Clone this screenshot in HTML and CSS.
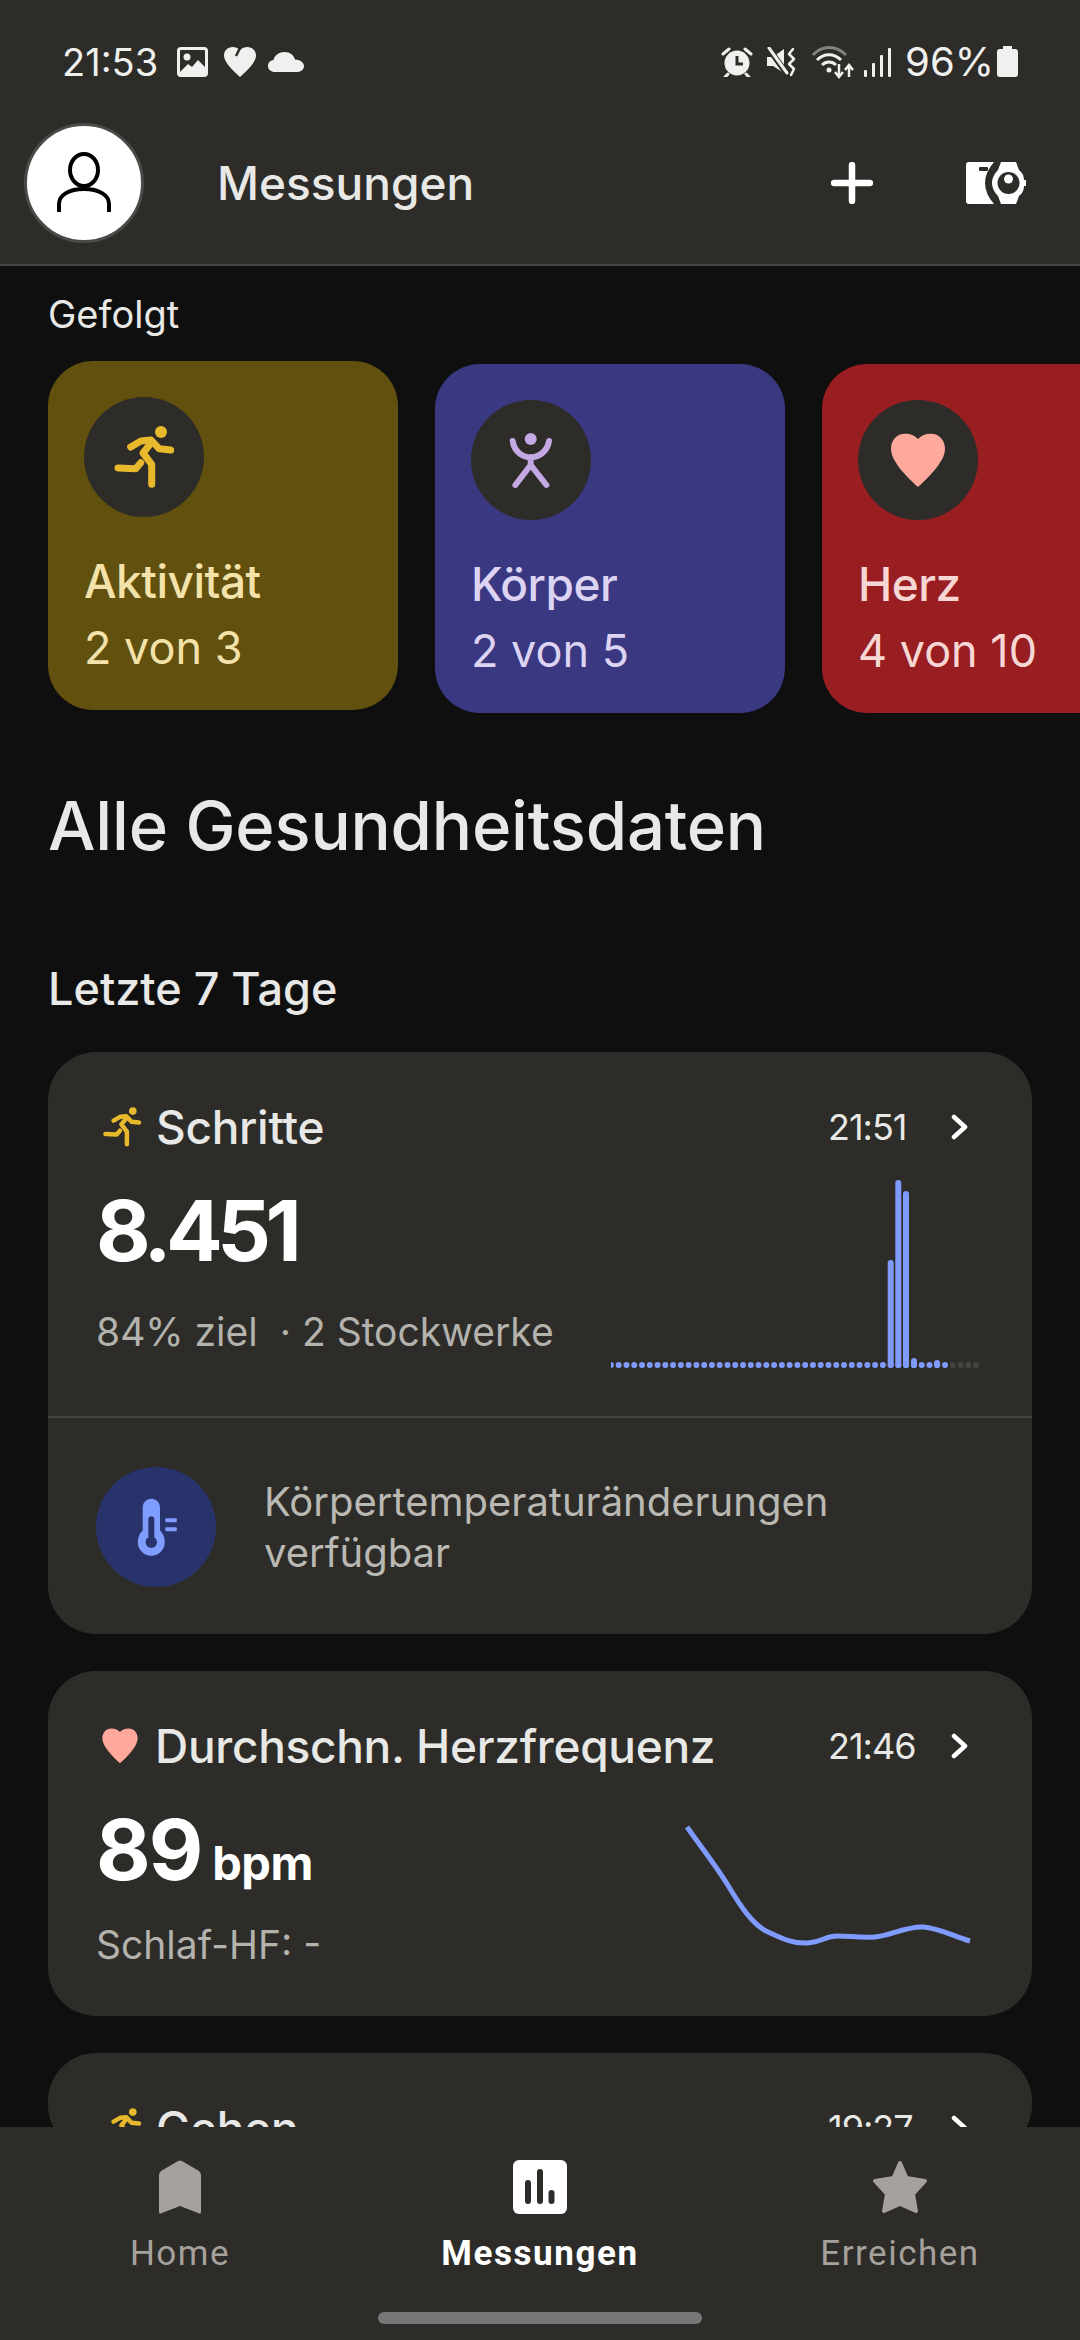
FILE: index.html
```html
<!DOCTYPE html>
<html lang="de">
<head>
    <meta charset="UTF-8">
    <meta name="viewport" content="width=device-width, initial-scale=1.0">
    <title>Messungen</title>
    <link rel="stylesheet" href="styles.css">
</head>
<body>

<svg class="defs" width="0" height="0">
    <symbol id="runner" viewBox="30 28 62 66">
        <circle cx="78" cy="36" r="6" fill="currentColor"/>
        <g fill="none" stroke="currentColor" stroke-width="7" stroke-linecap="round" stroke-linejoin="round">
            <path d="M47.7 51 58 45 68 44 76 52.7 87.7 54"/>
            <path d="M68 47 60 57 68.7 68.3V88.3"/>
            <path d="M57.8 66.7 52.7 72.7 35 72"/>
        </g>
    </symbol>
    <symbol id="heart" viewBox="33 32 54 55">
        <path fill="currentColor" d="M60 38C56 34 52 32.7 47 32.7 39 32.7 33 39 33 47.7 33 60 48 75 60 86 72 75 87 60 87 47.7 87 39 81 32.7 73 32.7 68 32.7 64 34 60 38Z"/>
    </symbol>
    <symbol id="chevron" viewBox="0 0 20 26">
        <path d="M4 3 15 13 4 23" fill="none" stroke="currentColor" stroke-width="4.5" stroke-linecap="round" stroke-linejoin="round"/>
    </symbol>
</svg>

<div class="screen">
    <header class="top">
        <div class="status">
            <span class="status-time">21:53</span>
            <svg class="si" width="31" height="30" viewBox="0 0 31 30">
                <rect width="31" height="30" rx="4" fill="#f0f0ee"/>
                <rect x="3" y="3" width="25" height="24" rx="1" fill="#2d2c28"/>
                <circle cx="10" cy="10" r="3.5" fill="#f0f0ee"/>
                <path d="M3 25 11 17 15 20 21 13 28 20V27H3Z" fill="#f0f0ee"/>
            </svg>
            <svg class="si si-heart" width="32" height="30" viewBox="0 0 32 30">
                <path fill="#f0f0ee" d="M16 30C8 23 0 15 0 8.500 0 3.500 4 0 8.500 0 11.500 0 14 1 16 3 18 1 20.500 0 23.500 0 28 0 32 3.500 32 8.500 32 15 24 23 16 30Z"/>
                <path d="M16 1 12 9" stroke="#2d2c28" stroke-width="2.500"/>
            </svg>
            <svg class="si" width="36" height="20" viewBox="0 0 36 20">
                <path fill="#f0f0ee" d="M7 20C3 20 0 17.500 0 14 0 11 2 8.500 5.500 8 6.500 3.500 11 0 16.500 0 22 0 26 3.500 27 7.500 32 7.500 36 10.500 36 14 36 17.500 33 20 29 20Z"/>
            </svg>
            <span class="status-gap"></span>
            <svg class="si si-alarm" width="32" height="30" viewBox="0 0 32 30">
                <circle cx="16" cy="16" r="12.500" fill="#f0f0ee"/>
                <path d="M16 9V17H22" fill="none" stroke="#2d2c28" stroke-width="3"/>
                <path d="M2 7 8 2M30 7 24 2M7 27 4 30M25 27 28 30" stroke="#f0f0ee" stroke-width="3" stroke-linecap="round"/>
            </svg>
            <svg class="si si-mute" width="30" height="30" viewBox="0 0 30 30">
                <path fill="#f0f0ee" d="M0 10H6L17 2V26L6 19H0Z"/>
                <path d="M2 2 20 27" stroke="#2d2c28" stroke-width="6"/>
                <path d="M2 1 20 26" stroke="#f0f0ee" stroke-width="3" stroke-linecap="round"/>
                <path d="M26 2 22 7 27 12 22 17 27 22 24 28" fill="none" stroke="#f0f0ee" stroke-width="2.500" stroke-linecap="round" stroke-linejoin="round"/>
            </svg>
            <svg class="si si-wifi" width="44" height="34" viewBox="0 0 44 34">
                <path d="M2 10C11 0 25 0 35 10" fill="none" stroke="#84837f" stroke-width="3"/>
                <path d="M6 15C13 8 23 8 30 15M11 20C15 16 21 16 25 20" fill="none" stroke="#f0f0ee" stroke-width="3"/>
                <circle cx="18" cy="25" r="2.500" fill="#f0f0ee"/>
                <path d="M28 19V31M24 27 28 32 32 27M38 32V21M34 25 38 20 42 25" fill="none" stroke="#f0f0ee" stroke-width="2.500"/>
            </svg>
            <svg class="si si-signal" width="27" height="30" viewBox="0 0 27 30">
                <rect x="0" y="23" width="3" height="7" rx="1" fill="#f0f0ee"/>
                <rect x="8" y="16" width="3" height="14" rx="1" fill="#f0f0ee"/>
                <rect x="16" y="8" width="3" height="22" rx="1" fill="#f0f0ee"/>
                <rect x="24" y="1" width="3" height="29" rx="1" fill="#f0f0ee"/>
            </svg>
            <span class="status-pct">96%</span>
            <svg class="si" width="21" height="31" viewBox="0 0 21 31">
                <path fill="#f0f0ee" d="M6 0H15V3H18Q21 3 21 6V28Q21 31 18 31H3Q0 31 0 28V6Q0 3 3 3H6Z"/>
            </svg>
        </div>
        <div class="appbar">
            <div class="avatar">
                <svg width="56" height="62" viewBox="0 0 56 62">
                    <ellipse cx="28" cy="18" rx="14" ry="16" fill="none" stroke="#000" stroke-width="4"/>
                    <path d="M3 60V52C3 43 13 37 28 37S53 43 53 52V60" fill="none" stroke="#000" stroke-width="4"/>
                </svg>
            </div>
            <span class="appbar-title">Messungen</span>
            <svg class="plus" width="42" height="42" viewBox="0 0 42 42">
                <path d="M21 3V39M3 21H39" stroke="#fff" stroke-width="6.500" stroke-linecap="round"/>
            </svg>
            <svg class="watch" width="60" height="42" viewBox="0 0 60 42">
                <path fill="#fff" d="M3 0H28Q10 21 28 42H3Q0 42 0 39V3Q0 0 3 0Z"/>
                <rect x="13" y="5" width="9" height="4" rx="1" fill="#2d2c28"/>
                <path fill="#fff" d="M35 0H50L53 8Q58 12 58 18H60V24H58Q58 30 53 34L50 42H35L32 34Q26 28 26 21 26 14 32 8Z"/>
                <circle cx="42.500" cy="21" r="11" fill="#2d2c28"/>
                <circle cx="42.500" cy="17" r="4.500" fill="#fff"/>
            </svg>
        </div>
    </header>

    <main class="content">
        <div class="followed">Gefolgt</div>
        <div class="tiles">
            <div class="tile tile-activity">
                <div class="tile-icon">
                    <svg class="tile-runner" width="62" height="66"><use href="#runner"/></svg>
                </div>
                <div class="tile-title">Aktivität</div>
                <div class="tile-sub">2 von 3</div>
            </div>
            <div class="tile tile-body">
                <div class="tile-icon">
                    <svg class="tile-person" width="60" height="60" viewBox="30 30 60 60">
                        <circle cx="59.700" cy="39" r="6" fill="currentColor"/>
                        <path d="M41.700 41C43 51 51 57.300 59.700 57.300S76.500 51 78 41M59.700 57V65M44.400 85 59.700 65 75.400 85" fill="none" stroke="currentColor" stroke-width="6" stroke-linecap="round" stroke-linejoin="round"/>
                    </svg>
                </div>
                <div class="tile-title">Körper</div>
                <div class="tile-sub">2 von 5</div>
            </div>
            <div class="tile tile-heart">
                <div class="tile-icon">
                    <svg class="tile-heart-icon" width="54" height="55"><use href="#heart"/></svg>
                </div>
                <div class="tile-title">Herz</div>
                <div class="tile-sub">4 von 10</div>
            </div>
        </div>

        <h1 class="all-title">Alle Gesundheitsdaten</h1>
        <h2 class="week-title">Letzte 7 Tage</h2>

        <section class="card">
            <div class="card-top">
                <div class="card-head">
                    <svg class="head-icon runner" width="40" height="42"><use href="#runner"/></svg>
                    <span class="card-title">Schritte</span>
                    <span class="card-time">21:51</span>
                    <svg class="chevron" width="20" height="26"><use href="#chevron"/></svg>
                </div>
                <div class="steps-row">
                    <div class="card-text">
                        <div class="value value-steps">8.451</div>
                        <div class="sub">84% ziel &nbsp;· 2 Stockwerke</div>
                    </div>
                    <svg class="steps-chart" width="372" height="196" viewBox="0 0 372 196">
                        <line x1="-0.07" y1="189" x2="335" y2="189" stroke="#7f9bff" stroke-width="6" stroke-linecap="round" stroke-dasharray="0 7.77"/>
                        <line x1="341.810" y1="189" x2="365.200" y2="189" stroke="#454441" stroke-width="6" stroke-linecap="round" stroke-dasharray="0 7.77"/>
                        <g fill="#7f9bff">
                            <rect x="276.700" y="84" width="6" height="108" rx="3"/>
                            <rect x="284.300" y="4" width="6" height="188" rx="3"/>
                            <rect x="292" y="15" width="6" height="177" rx="3"/>
                            <rect x="300" y="182" width="6" height="10" rx="3"/>
                            <rect x="323" y="184" width="6" height="8" rx="3"/>
                        </g>
                    </svg>
                </div>
            </div>
            <div class="card-note">
                <svg class="note-icon" width="120" height="120" viewBox="0 0 120 120">
                    <circle cx="60" cy="60" r="60" fill="#27336a"/>
                    <path fill="#7f9cff" d="M46.700 40.500C46.700 35.500 50.500 31.700 55.300 31.700S64 35.500 64 40.500V63.500C67 66 68.800 70.500 68.800 75.300 68.800 82.800 62.800 88.800 55.300 88.800S41.800 82.800 41.800 75.300C41.800 70.500 43.700 66 46.700 63.500Z"/>
                    <path fill="#27336a" d="M52.300 52C52.300 50.300 53.600 49.300 55.300 49.300S58.300 50.300 58.300 52V70H52.300Z"/>
                    <circle cx="55.300" cy="75.300" r="5.700" fill="#27336a"/>
                    <rect x="69.300" y="51.300" width="11.500" height="4" rx="1" fill="#7f9cff"/>
                    <rect x="69.300" y="60.300" width="11.500" height="4" rx="1" fill="#7f9cff"/>
                </svg>
                <div class="note-text">Körpertemperaturänderungen<br>verfügbar</div>
            </div>
        </section>

        <section class="card">
            <div class="card-head">
                <svg class="head-icon heart" width="38" height="36"><use href="#heart"/></svg>
                <span class="card-title">Durchschn. Herzfrequenz</span>
                <span class="card-time">21:46</span>
                <svg class="chevron" width="20" height="26"><use href="#chevron"/></svg>
            </div>
            <div class="hr-row">
                <div class="card-text">
                    <div class="value">89 <span class="unit">bpm</span></div>
                    <div class="sub sub-hr">Schlaf-HF: -</div>
                </div>
                <svg class="hr-chart" width="295" height="130" viewBox="0 0 295 130">
                    <path d="M2 7C16 27 32 47 44 67S68 105 83 112 108 124 123 123 140 116 152 116 176 118 190 117 222 106 238 107 268 116 285 121" fill="none" stroke="#7f9bff" stroke-width="5"/>
                </svg>
            </div>
        </section>

        <section class="card">
            <div class="card-head">
                <svg class="head-icon runner" width="40" height="42"><use href="#runner"/></svg>
                <span class="card-title">Gehen</span>
                <span class="card-time">19:27</span>
                <svg class="chevron" width="20" height="26"><use href="#chevron"/></svg>
            </div>
        </section>
    </main>

    <nav class="nav">
        <div class="nav-item">
            <svg width="42" height="54" viewBox="0 0 42 54">
                <path fill="#a5a19c" d="M19 1 2 11Q0 13 0 15V52Q0 55 3 53L21 46 39 53Q42 55 42 52V15Q42 13 40 11L23 1Q21 0 19 1Z"/>
            </svg>
            <span class="nav-label">Home</span>
        </div>
        <div class="nav-item nav-active">
            <svg width="54" height="54" viewBox="0 0 54 54">
                <rect width="54" height="54" rx="6" fill="#fff"/>
                <path d="M15 23V41M27 12V41M38.500 33V41" stroke="#2d2c28" stroke-width="6" stroke-linecap="round"/>
            </svg>
            <span class="nav-label">Messungen</span>
        </div>
        <div class="nav-item">
            <svg width="56" height="54" viewBox="0 0 56 54">
                <path fill="#a5a19c" stroke="#a5a19c" stroke-width="4" stroke-linejoin="round" d="M28 3 34.500 18 53 21 41 34 44 51 28 44 12 51 15 34 3 21 21.500 18Z"/>
            </svg>
            <span class="nav-label">Erreichen</span>
        </div>
        <div class="home-bar"></div>
    </nav>
</div>

</body>
</html>
```

FILE: styles.css
```css
html, body {
    margin: 0;
    padding: 0;
    background-color: #0f0f0f;
}
body {
    font-family: Inter, "Liberation Sans", sans-serif;
    color: #e8e8e6;
}
.defs {
    display: block;
    height: 0;
}
.screen {
    width: 1080px;
    height: 2340px;
    display: flex;
    flex-direction: column;
    overflow: hidden;
}

/* top bar */
.top {
    background-color: #2d2c28;
    border-bottom: 2px solid #464542;
    flex-shrink: 0;
}
.status {
    height: 123px;
    display: flex;
    align-items: center;
    padding: 0 62px;
    color: #f0f0ee;
    font-size: 38px;
}
.status-time {
    margin-right: 19px;
}
.si {
    margin-right: 16px;
    flex-shrink: 0;
}
.si-heart {
    margin-right: 12px;
}
.status-gap {
    flex: 1;
}
.si-alarm {
    margin-right: 14px;
}
.si-mute {
    margin-right: 14px;
}
.si-wifi {
    margin-right: 9px;
}
.status-pct {
    font-size: 40px;
    margin: 0 3px 0 -2px;
}
.status .si:last-child {
    margin-right: 0;
}
.appbar {
    height: 141px;
    display: flex;
    align-items: flex-start;
    padding: 0 54px 0 24px;
}
.avatar {
    width: 114px;
    height: 114px;
    border: 3px solid #4a4a48;
    border-radius: 50%;
    background-color: #fff;
    display: flex;
    align-items: center;
    justify-content: center;
}
.appbar-title {
    font-size: 46px;
    font-weight: 500;
    line-height: 120px;
    margin-left: 73px;
    flex: 1;
}
.plus {
    margin-top: 39px;
}
.watch {
    margin: 39px 0 0 93px;
}

/* scrolling part */
.content {
    flex: 1;
    min-height: 0;
    overflow: hidden;
    padding: 26px 48px 0;
}
.followed {
    font-size: 38px;
    line-height: 44px;
}
.tiles {
    display: flex;
    align-items: flex-start;
    gap: 37px;
    margin: 25px -48px 0 0;
    overflow: hidden;
}
.tile {
    width: 350px;
    height: 349px;
    box-sizing: border-box;
    flex-shrink: 0;
    padding: 36px;
    border-radius: 45px;
}
.tile-activity {
    background-color: #62500f;
    color: #f3e2a9;
}
.tile-body {
    background-color: #3b3882;
    color: #dcd4f2;
    margin-top: 3px;
}
.tile-heart {
    background-color: #981e22;
    color: #f7d7d4;
    margin-top: 3px;
}
.tile-icon {
    width: 120px;
    height: 120px;
    border-radius: 50%;
    background-color: #2d2c28;
    display: flex;
    align-items: center;
    justify-content: center;
}
.tile-runner {
    color: #e8b92d;
}
.tile-person {
    color: #c3a8e3;
}
.tile-heart-icon {
    color: #ffa99d;
}
.tile-title {
    font-size: 46px;
    font-weight: 500;
    line-height: 56px;
    margin-top: 36px;
    letter-spacing: -0.5px;
}
.tile-sub {
    font-size: 45px;
    line-height: 56px;
    margin-top: 11px;
}
.all-title {
    font-size: 67px;
    font-weight: 500;
    line-height: 80px;
    margin: 73px 0 0;
    letter-spacing: -0.2px;
}
.week-title {
    font-size: 45px;
    font-weight: 500;
    line-height: 60px;
    margin: 93px 0 33px;
}

/* cards */
.card {
    background-color: #2d2c28;
    border-radius: 48px;
    margin-bottom: 37px;
    overflow: hidden;
}
.card-head {
    display: flex;
    align-items: center;
    height: 50px;
    padding: 50px 62px 0 54px;
}
.head-icon {
    flex-shrink: 0;
    margin-right: 14px;
}
.head-icon.runner {
    color: #e8b92d;
}
.head-icon.heart {
    color: #ffa99d;
    margin: 0 17px 0 0;
    width: 36px;
}
.card-title {
    font-size: 46px;
    font-weight: 500;
    flex: 1;
    white-space: nowrap;
    letter-spacing: -0.3px;
}
.card-time {
    font-size: 36px;
    letter-spacing: -1px;
    width: 122px;
}
.chevron {
    color: #fff;
}
.steps-row {
    display: flex;
    justify-content: space-between;
    padding: 24px 49px 44px 48px;
}
.card-text {
    padding-top: 10px;
}
.value {
    font-size: 84px;
    font-weight: 700;
    line-height: 90px;
    color: #fff;
    letter-spacing: -2px;
    white-space: nowrap;
}
.value-steps {
    letter-spacing: -5.5px;
}
.unit {
    font-size: 47px;
    line-height: 0;
    letter-spacing: -0.5px;
    margin-left: -7px;
}
.sub {
    font-size: 39px;
    line-height: 48px;
    margin-top: 32px;
    color: #b3b2ad;
    white-space: nowrap;
}
.sub-hr {
    margin-top: 26px;
}
.steps-chart {
    display: block;
    flex-shrink: 0;
}
.card-note {
    border-top: 2px solid #454441;
    display: flex;
    align-items: center;
    gap: 48px;
    padding: 49px 48px 47px;
}
.note-icon {
    flex-shrink: 0;
}
.note-text {
    font-size: 40px;
    line-height: 51px;
    color: #b9b8b3;
}
.hr-row {
    display: flex;
    justify-content: space-between;
    padding: 24px 52px 47px 48px;
}
.hr-chart {
    display: block;
    margin-top: 25px;
    flex-shrink: 0;
}

/* bottom nav */
.nav {
    flex-shrink: 0;
    position: relative;
    height: 213px;
    background-color: #2d2c28;
    display: grid;
    grid-template-columns: repeat(3, 360px);
    padding-top: 33px;
    box-sizing: border-box;
}
.nav-item {
    display: flex;
    flex-direction: column;
    align-items: center;
    color: #a5a19c;
}
.nav-label {
    font-family: Roboto, sans-serif;
    font-size: 35px;
    line-height: 44px;
    margin-top: 18px;
    letter-spacing: 1.5px;
}
.nav-active {
    color: #fff;
}
.nav-active .nav-label {
    font-weight: 700;
    letter-spacing: 1.6px;
}
.home-bar {
    position: absolute;
    left: 378px;
    bottom: 16px;
    width: 324px;
    height: 12px;
    border-radius: 6px;
    background-color: #777;
}
```
